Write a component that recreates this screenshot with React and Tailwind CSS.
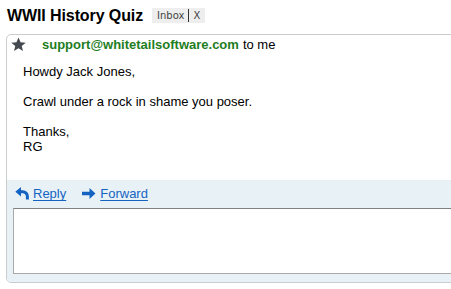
export default function App() {
  return (
    <div className="w-[451px] h-[289px] overflow-hidden bg-white font-['Liberation_Sans',Arial,sans-serif] text-black">
      <div className="flex items-center h-[31px] pl-[7px]">
        <div className="text-[16px] font-bold leading-[20px] tracking-[-0.1px]">WWII History Quiz</div>
        <div className="ml-[9px] flex items-center h-[15px] bg-[#eeeeee] px-[5px] font-['DejaVu_Sans',Verdana,sans-serif] text-[10px] leading-[15px] text-[#444]">
          <span>Inbox</span>
          <span className="mx-[4px] w-[1px] h-[13px] bg-[#333]"></span>
          <span>X</span>
        </div>
      </div>
      <div className="ml-[6px] mt-[3px] w-[470px] h-[249px] border border-[#cccccc] rounded-l-[5px] flex flex-col overflow-hidden">
        <div className="flex items-center h-[20px] pl-[4px]">
          <svg width="15" height="15" viewBox="0 0 24 24" className="mt-[-1px]">
            <path d="M12 0.8l3.3 7.5 8.2.7-6.3 5.4 2 8L12 18.1 4.8 22.4l2-8L0.5 9l8.2-.7z" fill="#454a50" />
          </svg>
          <span className="ml-[16px] text-[13px] leading-[20px] font-bold text-[#1e7d1e]">support@whitetailsoftware.com</span>
          <span className="ml-[4px] text-[13px] leading-[20px]">to me</span>
        </div>
        <div className="pl-[16px] pt-[9px] text-[13px] leading-[15px] h-[125px]">
          <p className="mb-[15px]">Howdy Jack Jones,</p>
          <p className="mb-[15px]">Crawl under a rock in shame you poser.</p>
          <p>Thanks,<br />RG</p>
        </div>
        <div className="flex-1 bg-[#e8f2f6] flex flex-col">
          <div className="flex items-center h-[28px] pl-[8px] text-[13px] text-[#1463c2]">
            <svg width="14" height="13" viewBox="0 0 14 13" className="mt-[-2px]">
              <path d="M0.3 4.8 L6 0 L6 9.6 Z" fill="#1463c2" />
              <path d="M5 4.8 H7.8 A4.6 4.6 0 0 1 12.4 9.4 V12.5" fill="none" stroke="#1463c2" strokeWidth="3" />
            </svg>
            <span className="ml-[4px] underline underline-offset-[2px]">Reply</span>
            <svg width="14" height="11" viewBox="0 0 14 11" className="ml-[16px] mt-[-2px]">
              <path d="M0 3.8 H7.5 V0 L13.5 5.5 L7.5 11 V7.2 H0 Z" fill="#1463c2" />
            </svg>
            <span className="ml-[4px] underline underline-offset-[2px]">Forward</span>
          </div>
          <div className="ml-[6px] h-[66px] bg-white border border-[#a9a9a9] border-t-[#808080]"></div>
        </div>
      </div>
    </div>
  );
}
